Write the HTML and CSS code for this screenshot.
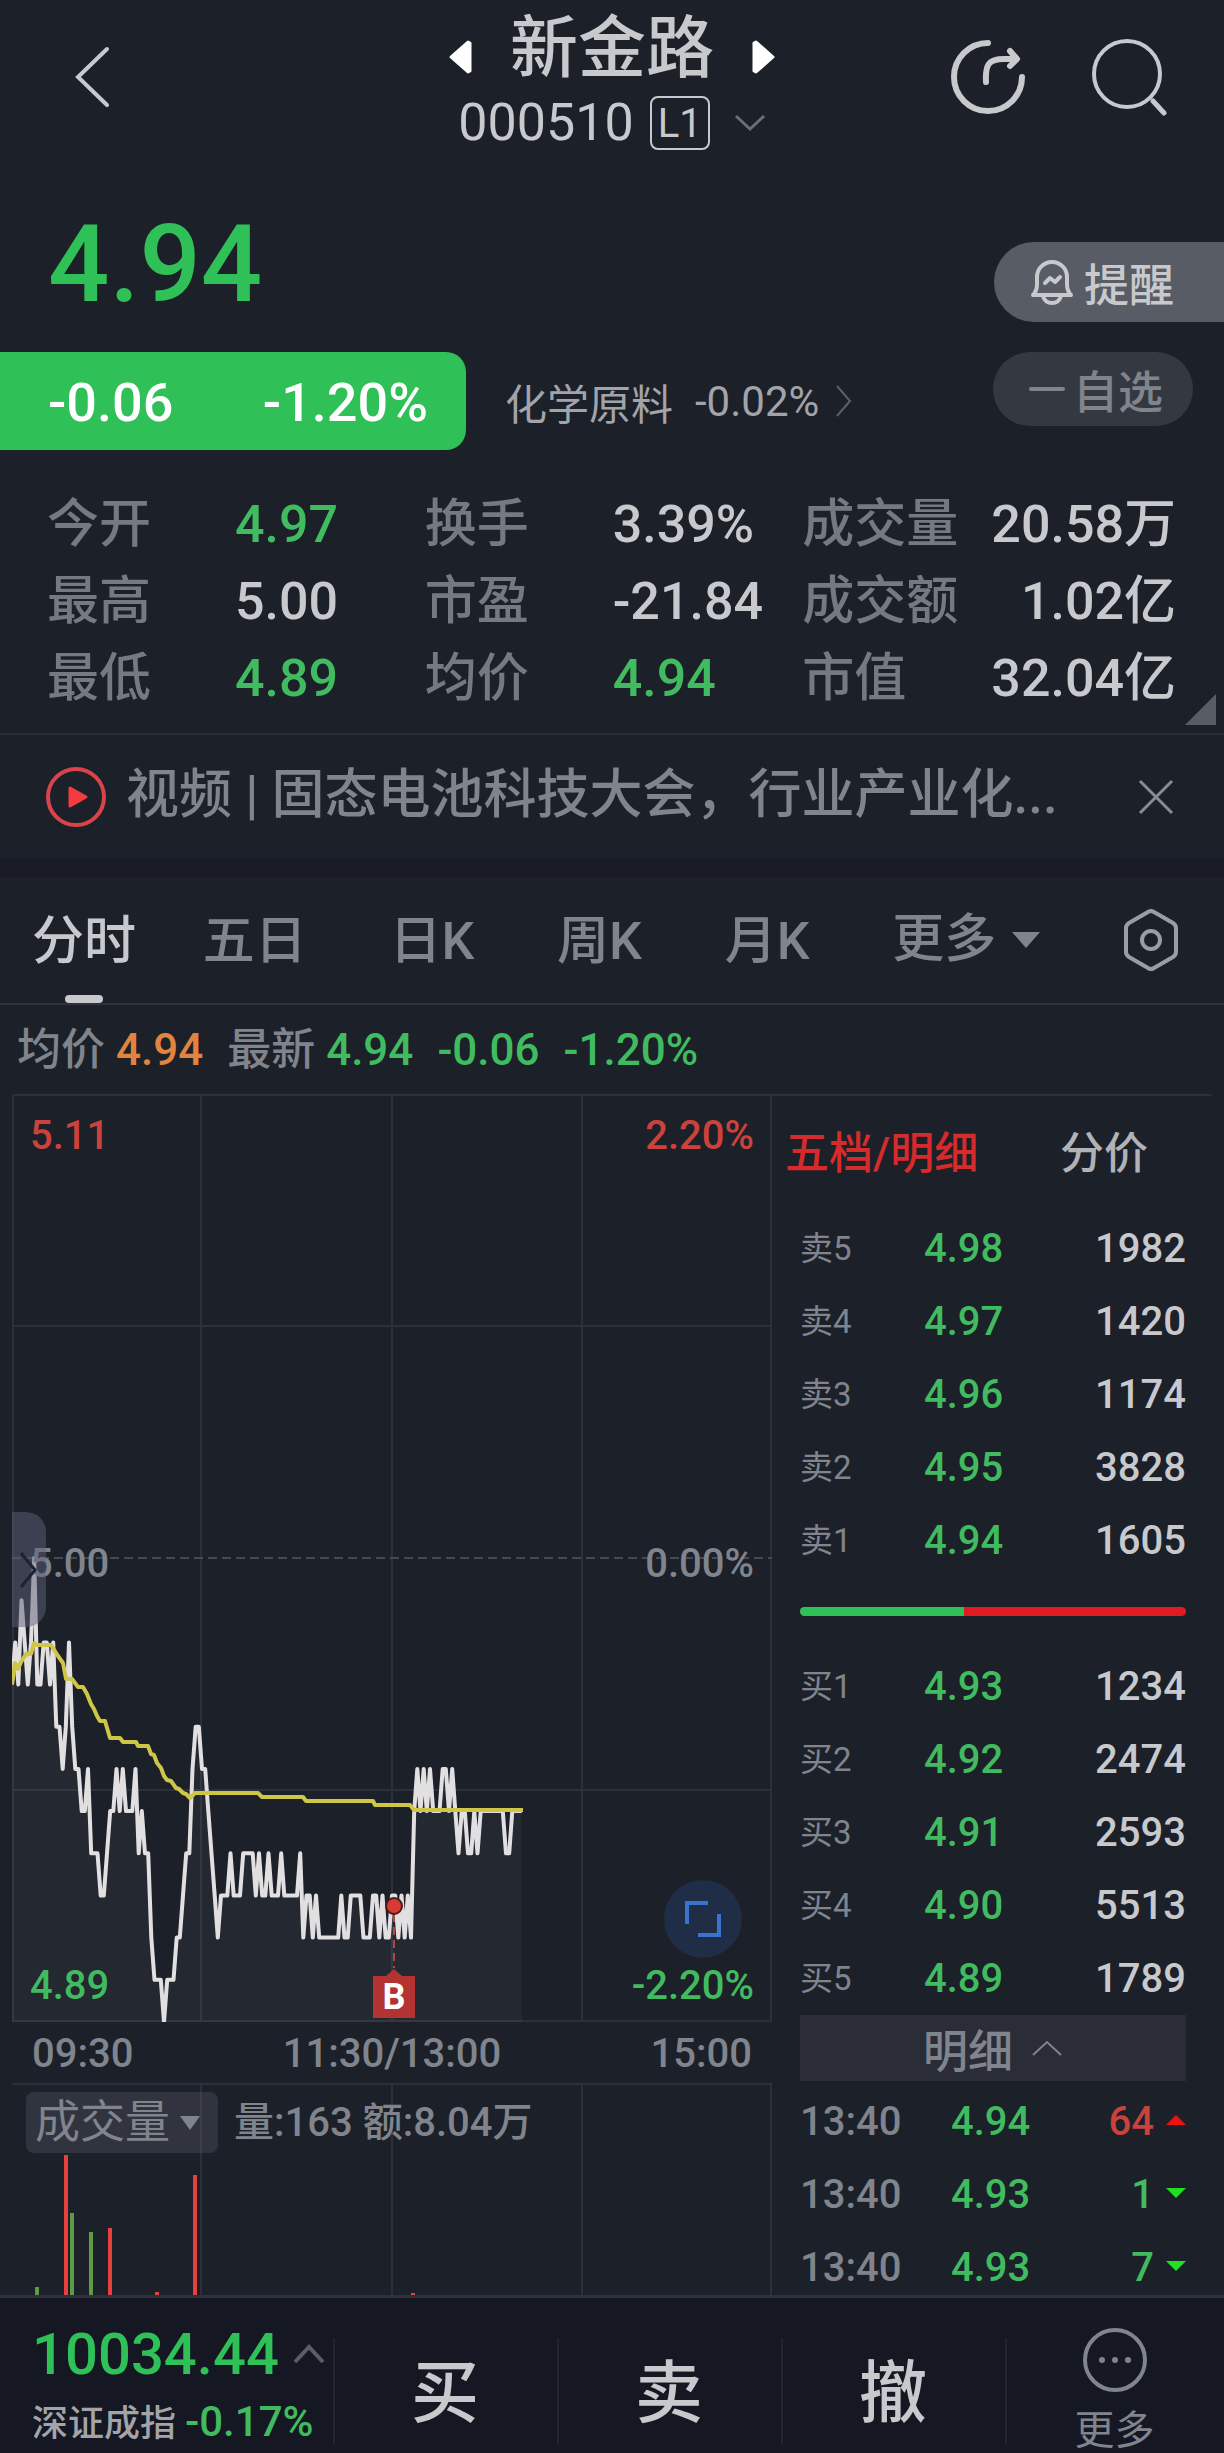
FILE: index.html
```html
<!DOCTYPE html>
<html lang="zh-CN">
<head>
  <meta charset="UTF-8">
  <meta name="viewport" content="width=device-width, initial-scale=1.0">
  <title>新金路 000510</title>
  <link rel="stylesheet" href="styles.css">
</head>
<body>

  <header class="header">
    <button class="icon-btn back" aria-label="返回">
      <svg width="40" height="64" viewBox="0 0 40 64"><path d="M35 4 L6 32 L35 60" fill="none" stroke="#c8c9cd" stroke-width="4" stroke-linecap="round"/></svg>
    </button>
    <div class="title">
      <div class="title-name">
        <button class="icon-btn" aria-label="上一只">
          <svg width="24" height="34" viewBox="0 0 24 34"><path d="M20 2 L3 17 L20 32 L22 31 V3 Z" fill="#fff" stroke="#fff" stroke-width="3" stroke-linejoin="round"/></svg>
        </button>
        <h1>新金路</h1>
        <button class="icon-btn" aria-label="下一只">
          <svg width="24" height="34" viewBox="0 0 24 34"><path d="M4 2 L21 17 L4 32 L2 31 V3 Z" fill="#fff" stroke="#fff" stroke-width="3" stroke-linejoin="round"/></svg>
        </button>
      </div>
      <div class="title-code">
        <span>000510</span>
        <span class="level">L1</span>
        <svg width="32" height="18" viewBox="0 0 32 18"><path d="M2 2 L16 15 L30 2" fill="none" stroke="#6b6f78" stroke-width="3"/></svg>
      </div>
    </div>
    <div class="header-actions">
      <button class="icon-btn" aria-label="分享">
        <svg width="76" height="76" viewBox="0 0 76 76" fill="none" stroke="#c8c9cd" stroke-width="6" stroke-linecap="round" stroke-linejoin="round">
          <path d="M38 4 A34 34 0 1 0 72 38"/>
          <path d="M36 43 C35 25 39 20 54 20 H66"/>
          <path d="M60 12 L67 20 L60 27" fill="#c8c9cd"/>
        </svg>
      </button>
      <button class="icon-btn" aria-label="搜索">
        <svg width="76" height="78" viewBox="0 0 76 78" fill="none" stroke="#c8c9cd" stroke-width="4" stroke-linecap="round">
          <circle cx="35" cy="36" r="33"/>
          <path d="M61 63 L72 75" stroke-width="5"/>
        </svg>
      </button>
    </div>
  </header>

  <section class="quote">
    <div class="quote-top">
      <div class="price">4.94</div>
      <button class="remind">
        <svg width="44" height="46" viewBox="0 0 44 46" fill="none" stroke="#c8c9cd" stroke-width="4" stroke-linejoin="round" stroke-linecap="round">
          <path d="M3 36 Q7 32 7 25 V18 A15 15 0 0 1 37 18 V25 Q37 32 41 36 Z"/>
          <path d="M13 37 Q15 44 22 44 Q29 44 31 37"/>
          <path d="M15 24 L20 19 L25 23 L30 18"/>
        </svg>
        提醒
      </button>
    </div>
    <div class="quote-change">
      <div class="change-box"><span>-0.06</span><span>-1.20%</span></div>
      <a class="sector" href="#">
        <span>化学原料</span><span>-0.02%</span>
        <svg width="18" height="34" viewBox="0 0 18 34"><path d="M2 2 L15 17 L2 32" fill="none" stroke="#5c6069" stroke-width="2"/></svg>
      </a>
      <button class="fav"><span class="minus"></span>自选</button>
    </div>
    <dl class="stats">
      <div><dt>今开</dt><dd class="green">4.97</dd></div>
      <div><dt>换手</dt><dd>3.39%</dd></div>
      <div><dt>成交量</dt><dd>20.58万</dd></div>
      <div><dt>最高</dt><dd>5.00</dd></div>
      <div><dt>市盈</dt><dd>-21.84</dd></div>
      <div><dt>成交额</dt><dd>1.02亿</dd></div>
      <div><dt>最低</dt><dd class="green">4.89</dd></div>
      <div><dt>均价</dt><dd class="green">4.94</dd></div>
      <div><dt>市值</dt><dd>32.04亿</dd></div>
    </dl>
    <span class="corner"></span>
  </section>

  <section class="news">
    <svg width="60" height="60" viewBox="0 0 60 60">
      <circle cx="30" cy="30" r="28" fill="none" stroke="#d9434a" stroke-width="4"/>
      <path d="M24 21 L40 30 L24 39 Z" fill="#f23c40" stroke="#f23c40" stroke-width="3" stroke-linejoin="round"/>
    </svg>
    <a href="#">视频 | 固态电池科技大会，行业产业化...</a>
    <button class="icon-btn" aria-label="关闭">
      <svg width="36" height="36" viewBox="0 0 36 36"><path d="M2 2 L34 34 M34 2 L2 34" stroke="#888c95" stroke-width="3"/></svg>
    </button>
  </section>

  <nav class="tabs">
    <button class="active">分时</button>
    <button>五日</button>
    <button>日K</button>
    <button>周K</button>
    <button>月K</button>
    <button class="tab-more">更多<span class="tri"></span></button>
    <button class="tab-set" aria-label="设置">
      <svg width="56" height="62" viewBox="0 0 56 62" fill="none" stroke="#9a9da5" stroke-width="4" stroke-linejoin="round">
        <path d="M25 3 Q28 1 31 3 L50 14 Q53 16 53 19 V43 Q53 46 50 48 L31 59 Q28 61 25 59 L6 48 Q3 46 3 43 V19 Q3 16 6 14 Z"/>
        <circle cx="28" cy="31" r="9"/>
      </svg>
    </button>
  </nav>

  <div class="info">
    <span>均价 <b class="orange">4.94</b></span>
    <span>最新 <b class="green">4.94</b></span>
    <b class="green">-0.06</b>
    <b class="green">-1.20%</b>
  </div>

  <main class="board">
    <div class="charts">
      <div class="chart">
        <svg viewBox="0 0 760 928">
          <g class="grid">
            <path d="M1 0 V928 M189 0 V928 M380 0 V928 M570 0 V928 M759 0 V928"/>
            <path d="M0 1 H760 M0 232 H760 M0 696 H760 M0 927 H760"/>
            <path d="M0 464 H760" stroke-dasharray="9 5" stroke="#454954"/>
          </g>
          <polygon id="area" fill="#ffffff" fill-opacity="0.04"/>
          <polyline id="line" fill="none" stroke="#e2dfe1" stroke-width="4" stroke-linejoin="round"/>
          <polyline fill="none" stroke="#cfc648" stroke-width="4" stroke-linejoin="round" points="0,590 3,569 6,575 9,568 14,560 19,560 22,549 25,551 39,551 46,562 51,569 54,585 60,585 66,593 71,593 75,600 79,610 82,615 85,622 88,627 93,627 98,644 108,644 111,648 124,648 126,652 136,652 139,660 142,661 145,669 149,674 152,682 155,686 159,687 164,694 167,695 171,699 174,700 178,704 183,699 246,699 250,703 291,703 294,707 361,707 363,711 398,711 402,716 511,716"/>
          <!-- buy marker -->
          <path d="M382 820 V874" stroke="#b04542" stroke-width="2" stroke-dasharray="8 5"/>
          <circle cx="382" cy="812" r="8" fill="#d93a34" stroke="#4a1a1e" stroke-width="2"/>
          <path d="M361 882 H374 L382 875 L390 882 H403 V924 H361 Z" fill="#b23332"/>
          <text x="382" y="915" text-anchor="middle" class="mark">B</text>
        </svg>
        <span class="lab top-left">5.11</span>
        <span class="lab top-right">2.20%</span>
        <span class="lab mid-left">5.00</span>
        <span class="lab mid-right">0.00%</span>
        <span class="lab bottom-left">4.89</span>
        <span class="lab bottom-right">-2.20%</span>
        <button class="handle" aria-label="展开">
          <svg width="18" height="38" viewBox="0 0 18 38"><path d="M2 2 L16 19 L2 36" fill="none" stroke="#1b2338" stroke-width="3"/></svg>
        </button>
        <button class="expand" aria-label="全屏">
          <svg width="36" height="36" viewBox="0 0 36 36"><path d="M2 23 V2 H23 M13 34 H34 V13" fill="none" stroke="#3a72cf" stroke-width="4"/></svg>
        </button>
      </div>
      <div class="times"><span>09:30</span><span>11:30/13:00</span><span>15:00</span></div>
      <div class="volume">
        <svg viewBox="0 0 760 212">
          <path class="grid" d="M0 1 H760 M189 0 V212 M380 0 V212 M570 0 V212 M759 0 V212"/>
          <g id="bars"></g>
        </svg>
        <div class="volume-head">
          <button>成交量<span class="tri small"></span></button>
          <span>量:163 额:8.04万</span>
        </div>
      </div>
    </div>

    <aside class="depth">
      <div class="depth-tabs">
        <button class="active">五档/明细</button>
        <button>分价</button>
      </div>
      <table class="orders">
        <tr><th>卖5</th><td>4.98</td><td>1982</td></tr>
        <tr><th>卖4</th><td>4.97</td><td>1420</td></tr>
        <tr><th>卖3</th><td>4.96</td><td>1174</td></tr>
        <tr><th>卖2</th><td>4.95</td><td>3828</td></tr>
        <tr><th>卖1</th><td>4.94</td><td>1605</td></tr>
      </table>
      <div class="ratio"><span style="width: 42.5%"></span></div>
      <table class="orders">
        <tr><th>买1</th><td>4.93</td><td>1234</td></tr>
        <tr><th>买2</th><td>4.92</td><td>2474</td></tr>
        <tr><th>买3</th><td>4.91</td><td>2593</td></tr>
        <tr><th>买4</th><td>4.90</td><td>5513</td></tr>
        <tr><th>买5</th><td>4.89</td><td>1789</td></tr>
      </table>
      <button class="detail">明细
        <svg width="32" height="18" viewBox="0 0 32 18"><path d="M2 16 L16 3 L30 16" fill="none" stroke="#80848d" stroke-width="2"/></svg>
      </button>
      <table class="trades">
        <tr><th>13:40</th><td>4.94</td><td class="up">64</td></tr>
        <tr><th>13:40</th><td>4.93</td><td class="down">1</td></tr>
        <tr><th>13:40</th><td>4.93</td><td class="down">7</td></tr>
      </table>
    </aside>
  </main>

  <footer class="bottom">
    <a class="index" href="#">
      <span class="index-value">10034.44
        <svg width="32" height="20" viewBox="0 0 32 20"><path d="M2 18 L16 3 L30 18" fill="none" stroke="#5a5d67" stroke-width="4"/></svg>
      </span>
      <span class="index-name">深证成指 <b class="green">-0.17%</b></span>
    </a>
    <button>买</button>
    <button>卖</button>
    <button>撤</button>
    <button class="more">
      <svg width="66" height="66" viewBox="0 0 66 66">
        <circle cx="33" cy="33" r="30" fill="none" stroke="#80848d" stroke-width="4"/>
        <circle cx="20" cy="33" r="3" fill="#80848d"/><circle cx="33" cy="33" r="3" fill="#80848d"/><circle cx="46" cy="33" r="3" fill="#80848d"/>
      </svg>
      更多
    </button>
  </footer>

  <script src="chart.js"></script>
</body>
</html>
```

FILE: styles.css
```css
* {
  box-sizing: border-box;
}

body {
  margin: 0;
  min-height: 100vh;
  display: flex;
  flex-direction: column;
  background-color: #1c2028;
  color: #c8c9cd;
  font-family: Roboto, "Noto Sans CJK SC", sans-serif;
  font-size: 40px;
  font-weight: 500;
}

button {
  padding: 0;
  border: none;
  background: none;
  color: inherit;
  font: inherit;
  cursor: pointer;
}

a {
  color: inherit;
  text-decoration: none;
}

b {
  font-weight: 500;
}

svg {
  display: block;
  flex: none;
}

.green { color: #41bb60; }
.orange { color: #e08440; }

/* header */
.header {
  display: grid;
  grid-template-columns: 1fr auto 1fr;
  align-items: start;
  height: 176px;
}

.back {
  justify-self: start;
  margin: 45px 0 0 72px;
}

.title {
  display: flex;
  flex-direction: column;
  align-items: center;
  padding-top: 5px;
}

.title-name {
  display: flex;
  align-items: center;
  gap: 38px;
  height: 88px;
}

.title-name button {
  margin-top: 16px;
}

h1 {
  margin: 0;
  font-size: 68px;
  font-weight: 500;
  line-height: 88px;
}

.title-code {
  display: flex;
  align-items: center;
  gap: 16px;
  height: 60px;
  font-size: 52px;
  font-weight: 400;
  line-height: 60px;
}

.level {
  width: 60px;
  height: 54px;
  border: 2px solid #c8c9cd;
  border-radius: 8px;
  font-size: 40px;
  line-height: 52px;
  text-align: center;
}

.title-code svg {
  margin-left: 8px;
}

.header-actions {
  display: flex;
  justify-content: flex-end;
  gap: 66px;
  padding: 38px 56px 0 0;
}

/* quote */
.quote {
  position: relative;
  height: 557px;
}

.quote-top,
.quote-change {
  display: flex;
  align-items: center;
}

.quote-top {
  justify-content: space-between;
  height: 176px;
}

.price {
  padding-left: 48px;
  font-size: 108px;
  line-height: 174px;
  color: #30c058;
}

.remind,
.fav {
  display: flex;
  align-items: center;
  font-size: 45px;
}

.remind {
  gap: 10px;
  width: 230px;
  height: 80px;
  margin-top: 36px;
  padding-left: 36px;
  border-radius: 40px 0 0 40px;
  background-color: #585c65;
}

.fav {
  align-self: flex-start;
  gap: 8px;
  width: 200px;
  height: 74px;
  margin-left: auto;
  margin-right: 31px;
  padding-left: 36px;
  border-radius: 37px;
  background-color: #343840;
  color: #80848d;
}

.minus {
  width: 36px;
  height: 4px;
  border-radius: 2px;
  background-color: #80848d;
}

.quote-change {
  height: 98px;
}

.change-box {
  display: flex;
  justify-content: space-between;
  width: 466px;
  height: 98px;
  padding: 0 38px 0 48px;
  border-radius: 0 20px 20px 0;
  background-color: #30c058;
  color: #fff;
  font-size: 54px;
  line-height: 102px;
}

.sector {
  display: flex;
  align-items: center;
  gap: 22px;
  margin-left: 39px;
  color: #a2a4a9;
  font-size: 42px;
  font-weight: 400;
}

.sector svg {
  margin-left: -6px;
}

.stats {
  display: grid;
  grid-template-columns: 377fr 377fr 373fr;
  margin: 0;
  padding: 36px 48px 0 47px;
  font-size: 52px;
  line-height: 77px;
}

.stats div {
  display: flex;
}

.stats dt {
  width: 188px;
  color: #747982;
}

.stats dd {
  margin: 0;
  white-space: nowrap;
}

.stats div:nth-child(3n) {
  justify-content: space-between;
}

.stats div:nth-child(3n) dt {
  width: auto;
}

.corner {
  position: absolute;
  right: 8px;
  bottom: 8px;
  border-left: 31px solid transparent;
  border-bottom: 31px solid #585c65;
}

/* news */
.news {
  display: flex;
  align-items: center;
  height: 144px;
  padding: 0 50px 0 46px;
  border-top: 2px solid #282c36;
  border-bottom: 19px solid #181a25;
  color: #80848d;
  font-size: 53px;
}

.news a {
  flex: 1;
  padding-left: 20px;
  line-height: 72px;
  padding-bottom: 4px;
  white-space: nowrap;
}

/* tabs */
.tabs {
  display: flex;
  justify-content: space-between;
  height: 128px;
  padding: 0 45px 0 32px;
  border-bottom: 2px solid #2e323d;
  color: #80848d;
  font-size: 52px;
  line-height: 130px;
}

.tabs .active {
  position: relative;
  margin-right: -16px;
  color: #c8c9cd;
}

.tabs .active::after {
  content: "";
  position: absolute;
  left: 33px;
  bottom: 0;
  width: 38px;
  height: 8px;
  border-radius: 4px;
  background-color: #c8c9cd;
}

.tab-more {
  display: flex;
  align-items: center;
  gap: 16px;
}

.tab-set {
  display: flex;
  align-items: center;
}

.tri {
  border: 14px solid transparent;
  border-top: 16px solid #80848d;
  border-bottom: 0;
}

.tri.small {
  border-width: 14px 10px 0;
}

/* average / latest line */
.info {
  display: flex;
  gap: 24px;
  height: 89px;
  padding-left: 17px;
  color: #80848d;
  font-size: 44px;
  line-height: 90px;
}

/* chart + depth */
.board {
  display: grid;
  grid-template-columns: minmax(0, 1fr) 440px;
  margin: 0 12px;
}

.charts svg {
  width: 100%;
}

.grid {
  fill: none;
  stroke: #2c303b;
  stroke-width: 2;
}

.chart {
  position: relative;
}

.mark {
  fill: #fff;
  font-size: 36px;
  font-weight: 700;
}

.lab {
  position: absolute;
  color: #80848d;
  line-height: 48px;
}

.top-left,
.top-right {
  top: 18px;
  color: #cb423d;
}

.mid-left,
.mid-right {
  top: 446px;
}

.bottom-left,
.bottom-right {
  bottom: 12px;
  color: #41bb60;
}

.top-left,
.mid-left,
.bottom-left {
  left: 18px;
}

.top-right,
.mid-right,
.bottom-right {
  right: 18px;
}

.chart .handle {
  position: absolute;
  left: 0;
  top: 418px;
  width: 34px;
  height: 115px;
  padding-left: 7px;
  border-radius: 0 20px 20px 0;
  background-color: rgba(92, 96, 120, 0.5);
}

.handle svg {
  width: 18px;
}

.chart .expand {
  position: absolute;
  right: 30px;
  bottom: 64px;
  display: grid;
  place-items: center;
  width: 78px;
  height: 78px;
  border-radius: 50%;
  background-color: #1f2d47;
}

.expand svg {
  width: 36px;
}

.times {
  display: flex;
  justify-content: space-between;
  height: 61px;
  padding: 0 20px;
  color: #80848d;
  line-height: 64px;
}

.volume {
  position: relative;
}

.volume-head {
  position: absolute;
  left: 14px;
  top: 9px;
  display: flex;
  align-items: center;
  gap: 16px;
  color: #80848d;
  line-height: 56px;
  white-space: nowrap;
}

.volume-head button {
  display: flex;
  align-items: center;
  gap: 10px;
  width: 192px;
  height: 61px;
  padding-left: 9px;
  border-radius: 8px;
  background-color: rgba(90, 92, 104, 0.35);
  font-size: 45px;
  font-weight: 400;
}

.depth {
  padding: 0 26px 0 28px;
  border-top: 2px solid #2c303b;
}

.depth-tabs {
  display: flex;
  justify-content: space-between;
  height: 116px;
  margin-left: -15px;
  padding-right: 38px;
  color: #b0b2b8;
  font-size: 44px;
  line-height: 116px;
}

.depth-tabs .active {
  color: #d62b2b;
}

.depth table {
  width: 100%;
  border-collapse: collapse;
  table-layout: fixed;
}

.depth tr {
  height: 73px;
}

.depth th {
  padding: 0;
  color: #80848d;
  font-size: 33px;
  font-weight: 400;
  line-height: 60px;
  text-align: left;
}

.depth td {
  padding: 0;
  line-height: 60px;
}

.orders th {
  width: 124px;
}

.depth td:nth-child(2) {
  color: #41bb60;
}

.depth td:last-child {
  text-align: right;
}

.ratio {
  height: 9px;
  margin: 30px 0 34px;
  border-radius: 5px;
  background-color: #e01c22;
  overflow: hidden;
}

.ratio span {
  display: block;
  height: 9px;
  background-color: #30c058;
}

.detail {
  display: flex;
  align-items: center;
  justify-content: center;
  gap: 18px;
  width: 100%;
  height: 66px;
  background-color: #2a2c37;
  color: #80848d;
  font-size: 45px;
}

/* last row runs slightly under the bottom bar */
.depth .trades {
  margin: 4px 0 -12px;
}

.depth .trades th {
  width: 151px;
  font-size: 40px;
  font-weight: 500;
}

.trades td:last-child::after {
  content: "";
  display: inline-block;
  margin-left: 12px;
  vertical-align: 10px;
  border: 10px solid transparent;
}

.trades .up { color: #cb423d; }
.trades .down { color: #41bb60; }

.trades td.up::after {
  border-width: 0 10px 10px;
  border-bottom-color: #f01010;
}

.trades td.down::after {
  border-width: 10px 10px 0;
  border-top-color: #20e020;
}

/* bottom bar */
.bottom {
  position: relative;
  display: grid;
  grid-template-columns: 333px repeat(3, 224px) 1fr;
  height: 158px;
  margin-top: auto;
  border-top: 3px solid #2e323d;
  background-color: #151823;
  overflow: hidden;
}

.bottom > button {
  position: relative;
  font-size: 68px;
  line-height: 120px;
  padding-top: 20px;
}

.bottom > button::before {
  content: "";
  position: absolute;
  left: 0;
  top: 40px;
  width: 2px;
  height: 106px;
  background-color: #22252f;
}

.index {
  padding: 22px 0 0 32px;
}

.index-value {
  display: flex;
  align-items: center;
  gap: 14px;
  height: 68px;
  color: #30c058;
  font-size: 58px;
}

.index-name {
  display: block;
  color: #a2a4a9;
  font-size: 36px;
  line-height: 68px;
  white-space: nowrap;
}

.index-name b {
  font-size: 42px;
}

.bottom .more {
  display: flex;
  flex-direction: column;
  align-items: center;
  padding-top: 29px;
  color: #80848d;
  font-size: 40px;
  font-weight: 400;
  line-height: 76px;
}
```

FILE: chart.js
```js
// one price per minute, in cents below 5.00
const prices = [
  3, 2, 3, 1, 2, 3, 2, 0, 3, 3, 2, 2, 3, 2, 4, 4, 5, 4, 2, 4,
  5, 5, 6, 6, 5, 7, 7, 7, 8, 8, 7, 6, 6, 5, 6, 5, 6, 6, 6, 5,
  7, 6, 7, 7, 9, 10, 10, 10, 11, 10, 10, 10, 9, 9, 8, 7, 7, 5, 4, 4,
  5, 5, 6, 7, 8, 9, 8, 8, 8, 7, 8, 8, 8, 7, 7, 7, 7, 8, 7, 8,
  8, 7, 8, 8, 8, 7, 8, 8, 8, 8, 8, 7, 9, 8, 8, 9, 8, 9, 9, 9,
  9, 9, 9, 9, 8, 9, 9, 8, 8, 8, 8, 9, 9, 9, 8, 8, 9, 8, 9, 9,
  8, 8, 9, 8, 9, 8, 9, 6, 5, 6, 5, 6, 5, 6, 6, 6, 5, 5, 6, 5,
  6, 7, 6, 6, 7, 7, 6, 7, 6, 6, 6, 6, 6, 6, 6, 6, 7, 7, 6, 6, 6, 6
];

const volumes = [
  { x: 25, h: 8, color: "#5f9a45" },
  { x: 54, h: 140, color: "#e8403f" },
  { x: 60, h: 82, color: "#5f9a45" },
  { x: 79, h: 63, color: "#5f9a45" },
  { x: 98, h: 67, color: "#e8403f" },
  { x: 145, h: 3, color: "#e8403f" },
  { x: 183, h: 120, color: "#e8403f" },
  { x: 401, h: 2, color: "#e8403f" }
];

const points = prices.map((p, i) => {
  const x = i * 760 / 240;
  const y = 464 + p * 464 / 11;
  return x.toFixed(1) + "," + y.toFixed(1);
});

document.getElementById("line").setAttribute("points", points.join(" "));
document.getElementById("area").setAttribute("points", "0,928 " + points.join(" ") + " 510,928");

const bars = document.getElementById("bars");
volumes.forEach(v => {
  const bar = document.createElementNS("http://www.w3.org/2000/svg", "rect");
  bar.setAttribute("x", v.x - 2);
  bar.setAttribute("y", 212 - v.h);
  bar.setAttribute("width", 4);
  bar.setAttribute("height", v.h);
  bar.setAttribute("fill", v.color);
  bars.appendChild(bar);
});
```
